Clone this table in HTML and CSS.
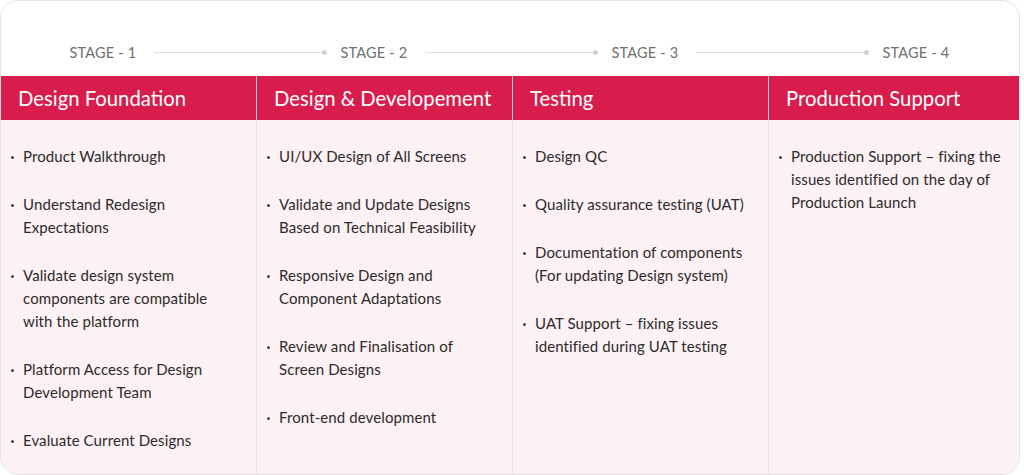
FILE: index.html
```html
<!DOCTYPE html>
<html lang="en">
<head>
<meta charset="utf-8">
<title>Stages</title>
<link rel="stylesheet" href="styles.css">
</head>
<body>
<div class="card">
  <div class="stages">
    <span class="stage">STAGE - 1</span>
    <span class="connector"></span>
    <span class="stage">STAGE - 2</span>
    <span class="connector"></span>
    <span class="stage">STAGE - 3</span>
    <span class="connector"></span>
    <span class="stage">STAGE - 4</span>
  </div>
  <div class="grid">
    <div class="col">
      <div class="head">Design Foundation</div>
      <ul class="list">
        <li>Product Walkthrough</li>
        <li>Understand Redesign Expectations</li>
        <li>Validate design system components are compatible with the platform</li>
        <li>Platform Access for Design Development Team</li>
        <li>Evaluate Current Designs</li>
      </ul>
    </div>
    <div class="col">
      <div class="head">Design &amp; Developement</div>
      <ul class="list">
        <li>UI/UX Design of All Screens</li>
        <li>Validate and Update Designs Based on Technical Feasibility</li>
        <li>Responsive Design and Component Adaptations</li>
        <li>Review and Finalisation of Screen Designs</li>
        <li>Front-end development</li>
      </ul>
    </div>
    <div class="col">
      <div class="head">Testing</div>
      <ul class="list">
        <li>Design QC</li>
        <li>Quality assurance testing (UAT)</li>
        <li>Documentation of components (For updating Design system)</li>
        <li>UAT Support – fixing issues identified during UAT testing</li>
      </ul>
    </div>
    <div class="col">
      <div class="head">Production Support</div>
      <ul class="list">
        <li>Production Support – fixing the issues identified on the day of Production Launch</li>
      </ul>
    </div>
  </div>
</div>
</body>
</html>
```

FILE: styles.css
```css
* { box-sizing: border-box; }
html, body { margin: 0; padding: 0; background: #ffffff; }
body { font-family: "Lato", "Noto Sans", sans-serif; }

.card {
  width: 1020px;
  height: 475px;
  border: 1px solid #e4e4e4;
  border-radius: 18px;
  overflow: hidden;
  display: flex;
  flex-direction: column;
  background: #fff;
}

.stages {
  flex: 0 0 75px;
  padding-top: 27px;
  display: flex;
  align-items: center;
  justify-content: center;
  gap: 16px;
}
.stage {
  font-size: 14.5px;
  color: #707070;
  letter-spacing: 0.2px;
  width: 68px;
  white-space: nowrap;
}
.connector {
  position: relative;
  width: 171px;
  height: 1px;
  background: #dedede;
}
.connector::after {
  content: "";
  position: absolute;
  right: -2px;
  top: -2px;
  width: 5px;
  height: 5px;
  border-radius: 50%;
  background: #d2d2d2;
}

.grid {
  flex: 1 1 auto;
  min-height: 0;
  display: grid;
  grid-template-columns: 256px 256px 256px 1fr;
  background: #fcf1f4;
}
.col {
  border-right: 1px solid #e9e1e4;
  display: flex;
  flex-direction: column;
}
.col:last-child { border-right: none; }
.head {
  flex: 0 0 41px;
  background: #d81c4c;
  color: #ffffff;
  font-size: 20.3px;
  line-height: 44px;
  padding-left: 17px;
  white-space: nowrap;
  box-shadow: 1px 0 0 #f3c9d4;
}
.list {
  list-style: none;
  margin: 0;
  padding: 25px 10px 0 22px;
}
.list li {
  position: relative;
  max-width: 212px;
  font-size: 15px;
  letter-spacing: 0.1px;
  line-height: 23px;
  color: #2e2a2b;
  margin-bottom: 25px;
}
.list li::before {
  content: "";
  position: absolute;
  left: -12px;
  top: 11px;
  width: 3px;
  height: 3px;
  border-radius: 50%;
  background: #444;
}
```
